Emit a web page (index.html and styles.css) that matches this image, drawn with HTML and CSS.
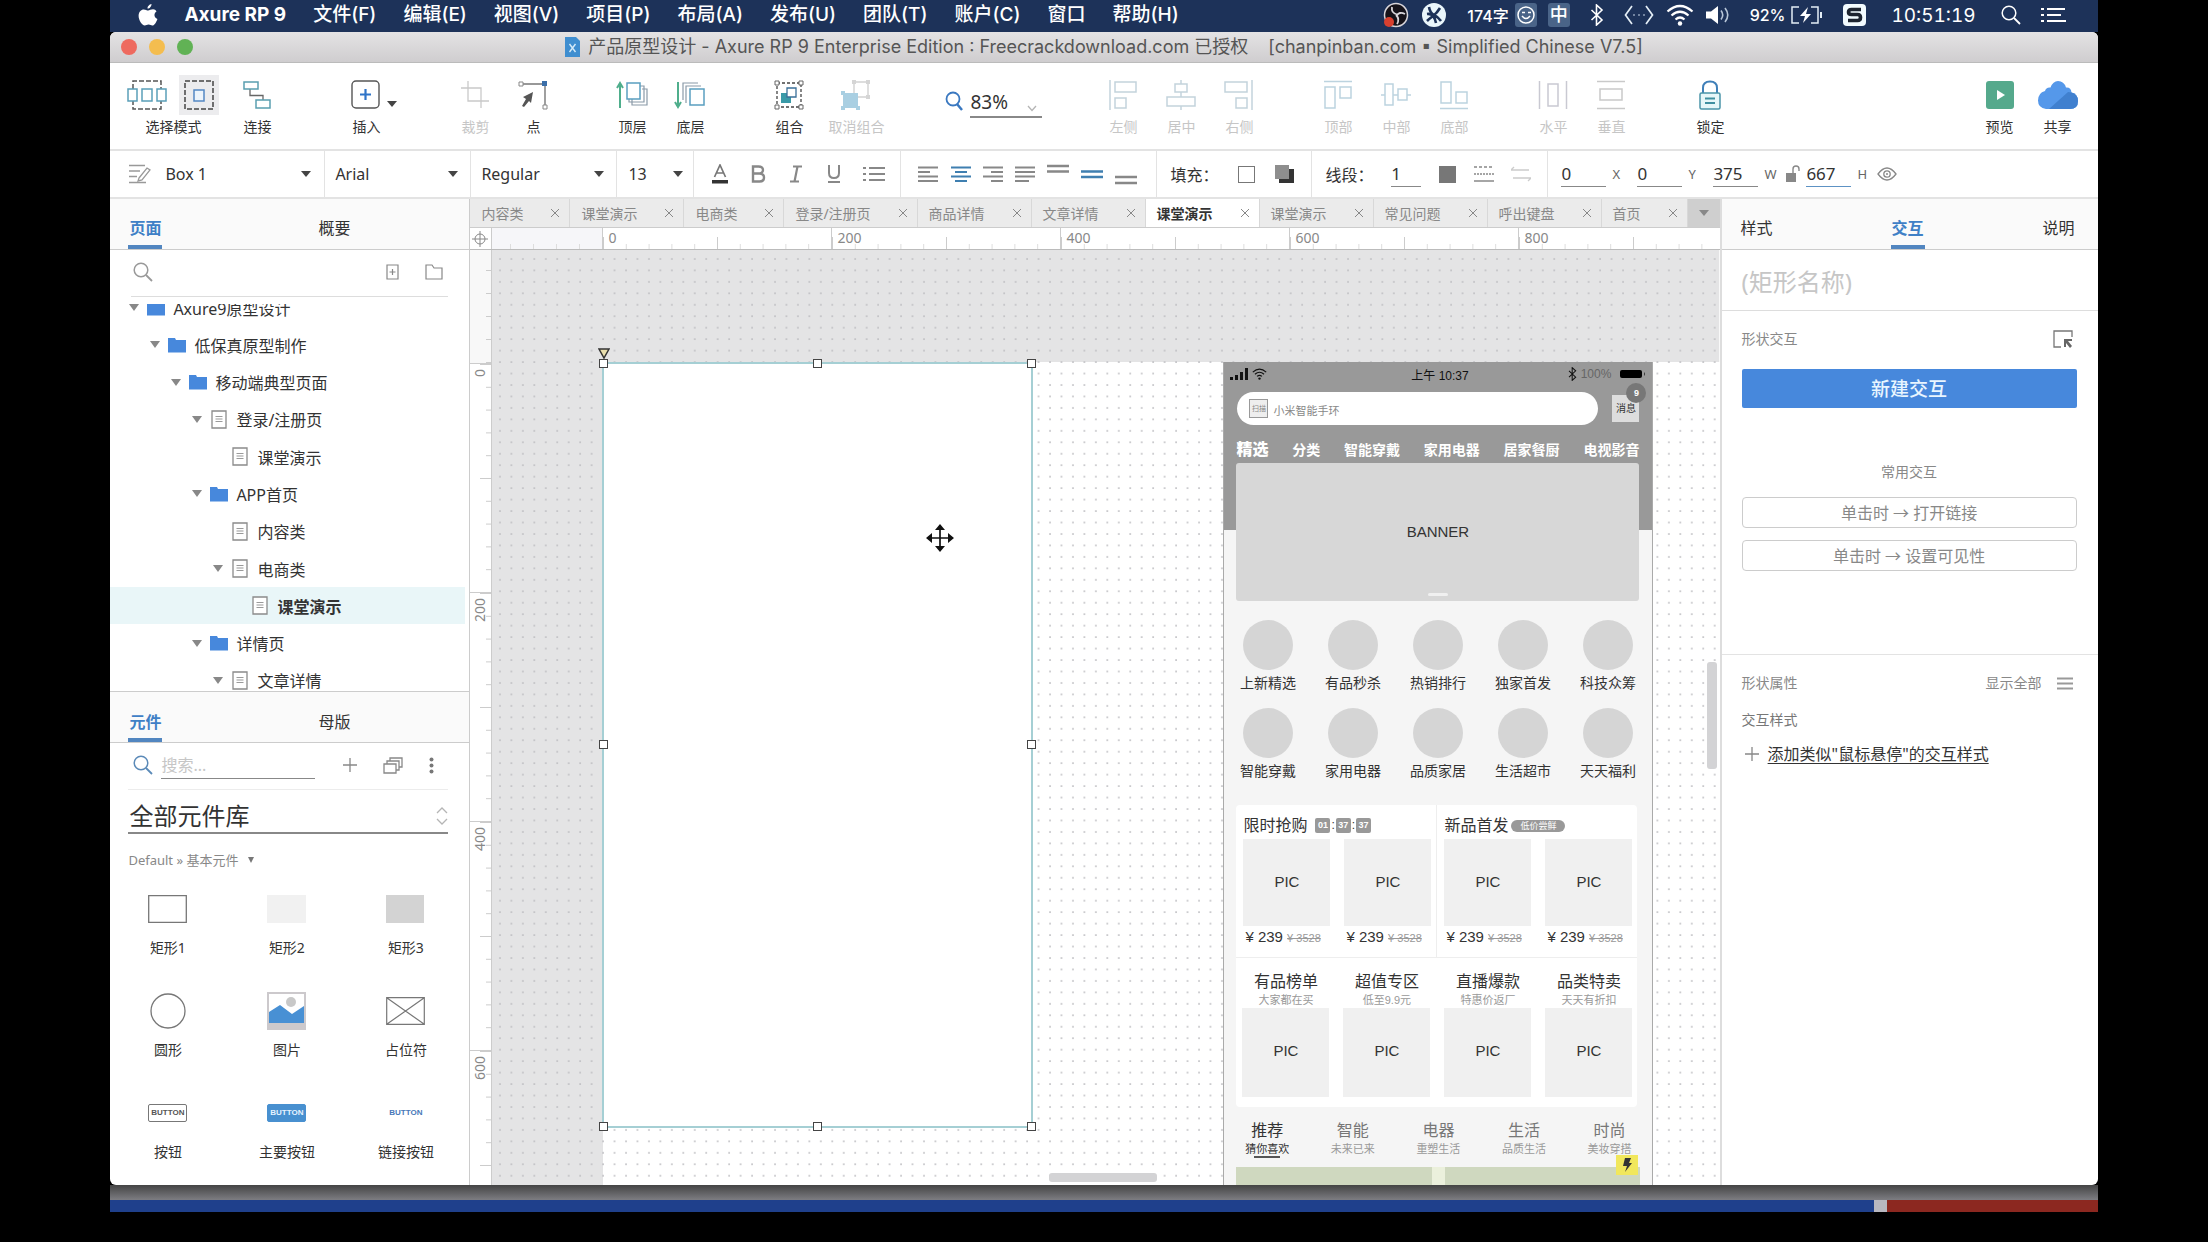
FILE: index.html
```html
<!DOCTYPE html>
<html lang="zh-CN">
<head>
    <meta charset="UTF-8">
    <meta name="viewport" content="width=device-width, initial-scale=1.0">
    <title>产品原型设计 - Axure RP 9</title>
    <link rel="stylesheet" href="styles.css">
</head>
<body>
    <svg width="0" height="0" class="sprite" aria-hidden="true">
        <symbol id="folder" viewBox="0 0 18 16"><path d="M0 1h7l1 2h10v12.500H0z" fill="#4788dc"/></symbol>
        <symbol id="page" viewBox="0 0 16 19"><path d="M1 1h14v17H1z" fill="#fff" stroke="#8b8b8b" stroke-width="1.300"/><path d="M4.500 6.500h7M4.500 9h7M4.500 11.500h7" stroke="#9a9a9a" stroke-width="1.200"/></symbol>
        <symbol id="search" viewBox="0 0 20 20"><circle cx="8" cy="8" r="6.800" fill="none" stroke="currentColor" stroke-width="1.500"/><path d="M13 13l6 6" stroke="currentColor" stroke-width="1.800"/></symbol>
        <symbol id="bt" viewBox="0 0 14 22"><path d="M1.500 6l10.500 10-5.500 5V1L12 6 1.500 16" fill="none" stroke="currentColor" stroke-width="1.600"/></symbol>
        <symbol id="wifi" viewBox="0 0 28 22"><g fill="none" stroke="currentColor" stroke-width="2.200"><path d="M1.500 7.500q12.500-11 25 0"/><path d="M5.500 11.500q8.500-7.500 17 0"/><path d="M9.500 15.500q4.500-4 9 0"/></g><circle cx="14" cy="19.500" r="2.200" fill="currentColor"/></symbol>
    </svg>

    <header class="menubar">
        <svg class="apple" width="20" height="22" viewBox="0 0 20 22"><path fill="#fff" d="M13.500 0c.2 2-1.700 4.700-4 4.600C9.300 2.600 11.400.3 13.500 0zM18.500 7.500c-3 2-2.600 6 .9 7.400-1 3-3 6.600-5 6.600-1.500 0-2-.9-3.800-.9s-2.400.9-3.800.9C3.900 21.500.6 16 .6 11.700c0-4 2.500-6.300 5.200-6.300 1.700 0 3 1.100 4.400 1.100 1.200 0 2.800-1.200 4.900-1.200 1.300 0 2.700.8 3.400 2.200z"/></svg>
        <nav class="menus">
            <button class="menu app">Axure RP 9</button>
            <button class="menu">文件(F)</button>
            <button class="menu">编辑(E)</button>
            <button class="menu">视图(V)</button>
            <button class="menu">项目(P)</button>
            <button class="menu">布局(A)</button>
            <button class="menu">发布(U)</button>
            <button class="menu">团队(T)</button>
            <button class="menu">账户(C)</button>
            <button class="menu">窗口</button>
            <button class="menu">帮助(H)</button>
        </nav>
        <div class="status">
            <div class="pair apps">
                <svg width="26" height="26" viewBox="0 0 26 26"><circle cx="13" cy="13" r="11.500" fill="#16131a" stroke="#d8d5da" stroke-width="1.500"/><path d="M9 5q-1 6 5 7.500M22 12q-6-3-8.500 2M14 22q3-5-1-9" fill="none" stroke="#d8d5da" stroke-width="1.800"/><circle cx="6" cy="20" r="5" fill="#d8402f"/></svg>
                <svg width="26" height="26" viewBox="0 0 26 26"><circle cx="13" cy="13" r="12" fill="#eaf6fb"/><path d="M8 5q1 6 5 8t7 6M19 6q-3 5-7 8t-6 5M6 12q7-1 9 9" stroke="#1c3158" stroke-width="2.600" fill="none"/></svg>
            </div>
            <div class="pair ime">
                <span>174字</span>
                <svg width="22" height="24" viewBox="0 0 22 24"><rect width="22" height="24" rx="3" fill="#4a6488"/><circle cx="11" cy="12" r="8" fill="none" stroke="#fff" stroke-width="1.500"/><path d="M7 9.500h3M13 9.500h3M7 13q4 5 8 0" fill="none" stroke="#fff" stroke-width="1.500"/></svg>
                <span class="zh">中</span>
            </div>
            <svg width="14" height="22"><use href="#bt"/></svg>
            <div class="pair">
                <svg width="30" height="20" viewBox="0 0 30 20"><path d="M8 1L1.500 10 8 19M22 1l6.500 9L22 19" fill="none" stroke="#e4eef6" stroke-width="1.700"/><path d="M9 10h2M14 10h2M19 10h2" stroke="#8fa0b8" stroke-width="1.500"/></svg>
                <svg width="28" height="22"><use href="#wifi"/></svg>
                <svg width="24" height="20" viewBox="0 0 24 20"><path d="M0 6.500h5L12 1v18l-7-5.500H0z" fill="#fff"/><path d="M15 5.500q3.500 4.500 0 9M19 3q5.500 7 0 14" fill="none" stroke="#b8c6d8" stroke-width="1.600"/></svg>
            </div>
            <div class="pair battery">
                <span>92%</span>
                <svg width="32" height="18" viewBox="0 0 32 18"><path d="M8 1H1v16h7M20 1h7v16h-7" fill="none" stroke="#e4eef6" stroke-width="1.500"/><path d="M17 1l-8 9h5l-2 7 8-9h-5z" fill="#fff"/><path d="M29 6v6h2V6z" fill="#e4eef6"/></svg>
            </div>
            <svg width="23" height="22" viewBox="0 0 23 22"><rect width="23" height="22" rx="4" fill="#f2fbff"/><path d="M18 5.500H8.500q-3 0-3 2.500t3 2.500h6q3 0 3 3t-3 3H5" fill="none" stroke="#1d2430" stroke-width="3.600"/></svg>
            <span class="clock">10:51:19</span>
            <svg width="20" height="20"><use href="#search"/></svg>
            <svg width="26" height="16" viewBox="0 0 26 16"><path d="M0 2h3M0 8h3M0 14h3M6 2h18M6 8h14M6 14h19" stroke="#fff" stroke-width="2.200"/></svg>
        </div>
    </header>

    <main class="window">
        <div class="titlebar">
            <div class="lights"><i class="red"></i><i class="yellow"></i><i class="green"></i></div>
            <h1 class="title">
                <svg width="15" height="20" viewBox="0 0 15 20"><path d="M0 0h11l4 4v16H0z" fill="#3f8ed0"/><path d="M4.500 7l6 8M10.500 7l-6 8" stroke="#d6ebf8" stroke-width="1.400"/></svg>
                <span>产品原型设计 - Axure RP 9 Enterprise Edition : Freecrackdownload.com 已授权</span>
                <span class="license">[chanpinban.com ▪ Simplified Chinese V7.5]</span>
            </h1>
        </div>

        <div class="toolbar">
            <div class="group">
                <button class="tool select-mode">
                    <span class="modes">
                        <svg width="40" height="30" viewBox="0 0 40 30"><path d="M6 9V1h28v8M6 20v9h28v-9" fill="none" stroke="#555" stroke-width="1.500" stroke-dasharray="5 2"/><g fill="#fff" stroke="#5a9fb8" stroke-width="1.500"><path d="M1 9h9v12H1zM15 9h10v12H15zM30 9h9v12h-9z"/></g></svg>
                        <span class="mode-on"><svg width="30" height="30" viewBox="0 0 30 30"><path d="M1 1h28v28H1z" fill="none" stroke="#444" stroke-width="1.500" stroke-dasharray="5 2"/><path d="M10 10h10v11H10z" fill="#edf4fb" stroke="#5488c4" stroke-width="1.500"/></svg></span>
                    </span>
                    选择模式
                </button>
                <button class="tool"><svg width="30" height="30" viewBox="0 0 30 30"><path d="M8 9v6.500h13V20" fill="none" stroke="#666" stroke-width="1.300"/><g fill="#fff" stroke="#5a9fb0" stroke-width="1.500"><path d="M2 2h14v7H2zM14 20h14v8H14z"/></g></svg>连接</button>
            </div>
            <div class="group insert">
                <button class="tool"><svg width="30" height="30" viewBox="0 0 30 30"><rect x="1" y="1" width="27" height="27" rx="4" fill="#fff" stroke="#555" stroke-width="1.400"/><path d="M9 14.500h11M14.500 9v11" stroke="#2f74c8" stroke-width="2.200"/></svg>插入</button>
                <i class="caret"></i>
            </div>
            <div class="group">
                <button class="tool off"><svg width="30" height="30" viewBox="0 0 30 30"><path d="M1 8h20v20M8 1v20h21" fill="none" stroke="#c9c9c9" stroke-width="1.300"/></svg>裁剪</button>
                <button class="tool"><svg width="30" height="30" viewBox="0 0 30 30"><path d="M3 4h24v23" fill="none" stroke="#777" stroke-width="1.400"/><path d="M1 2h4v4H1zM25 25h4v4h-4z" fill="#fff" stroke="#888"/><path d="M24 1h5v5h-5z" fill="#3b6ea8"/><path d="M15 12l-2 11-2-2-5 6-2-1 4-7-3-2z" fill="#555"/></svg>点</button>
            </div>
            <div class="group">
                <button class="tool"><svg width="32" height="30" viewBox="0 0 32 30"><path d="M4 28V4M1 8l3-5 3 5" fill="none" stroke="#4fae8c" stroke-width="2"/><path d="M16 18v7h15V9h-5M13 18v4h15V6h-5" fill="none" stroke="#8a9aa8" stroke-width="1.200"/><path d="M11 3h13v16H11z" fill="#fff" stroke="#5a9fc0" stroke-width="1.500"/></svg>顶层</button>
                <button class="tool"><svg width="32" height="30" viewBox="0 0 32 30"><path d="M4 2v24M1 22l3 5 3-5" fill="none" stroke="#4fae8c" stroke-width="2"/><path d="M9 20V3h15M12 23V6h15" fill="none" stroke="#8a9aa8" stroke-width="1.200"/><path d="M16 9h14v16H16z" fill="#fff" stroke="#5a9fc0" stroke-width="1.500"/></svg>底层</button>
            </div>
            <div class="group">
                <button class="tool"><svg width="30" height="30" viewBox="0 0 30 30"><path d="M3 3h24v24H3z" fill="none" stroke="#444" stroke-width="1.300" stroke-dasharray="3 2"/><path d="M1 1h4v4H1zM25 1h4v4h-4zM1 25h4v4H1zM25 25h4v4h-4z" fill="#fff" stroke="#666"/><path d="M7 13h10v10H7z" fill="#3a9aa8"/><path d="M13 8h9v9h-9z" fill="#fff" stroke="#3a6f98" stroke-width="1.300"/></svg>组合</button>
                <button class="tool wide off"><svg width="30" height="30" viewBox="0 0 30 30"><path d="M13 2h14v15H13z" fill="#fff" stroke="#d2d2d2" stroke-width="1.400"/><path d="M2 13h15v15H2z" fill="#a9cfe2"/><path d="M11 0h4v4h-4zM25 0h4v4h-4zM25 15h4v4h-4z" fill="#d5d5d5"/><path d="M0 11h4v4H0zM15 26h4v4h-4zM0 26h4v4H0z" fill="#a9cfe2"/></svg>取消组合</button>
            </div>
            <div class="zoom">
                <label for="zoom"><svg width="18" height="20" viewBox="0 0 18 20"><circle cx="8" cy="8" r="6.500" fill="none" stroke="#3a78c0" stroke-width="1.800"/><path d="M12 13l5 6" stroke="#3a78c0" stroke-width="2.500"/></svg></label>
                <select id="zoom"><option>83%</option></select>
                <svg class="chev" width="10" height="7" viewBox="0 0 10 7"><path d="M1 1l4 4.500L9 1" fill="none" stroke="#b5b5b5" stroke-width="1.300"/></svg>
            </div>
            <div class="group">
                <button class="tool off"><svg width="30" height="30" viewBox="0 0 30 30"><g fill="none" stroke="#c3d3dc" stroke-width="1.500"><path d="M2 0v30M7 2h21v10H7zM7 18h11v10H7z"/></g></svg>左侧</button>
                <button class="tool off"><svg width="30" height="30" viewBox="0 0 30 30"><g fill="#fff" stroke="#c3d3dc" stroke-width="1.500"><path d="M15 0v30"/><path d="M9 4h12v8H9zM1 17h28v9H1z"/></g></svg>居中</button>
                <button class="tool off"><svg width="30" height="30" viewBox="0 0 30 30"><g fill="none" stroke="#c3d3dc" stroke-width="1.500"><path d="M28 0v30M1 2h22v10H1zM12 18h11v10H12z"/></g></svg>右侧</button>
            </div>
            <div class="group">
                <button class="tool off"><svg width="30" height="30" viewBox="0 0 30 30"><g fill="none" stroke="#bcd3df" stroke-width="1.500"><path d="M1 1.500h28M2 7h10v21H2zM17 7h11v11H17z"/></g></svg>顶部</button>
                <button class="tool off"><svg width="30" height="30" viewBox="0 0 30 30"><g fill="#fff" stroke="#bcd3df" stroke-width="1.500"><path d="M0 15h30"/><path d="M4 4h8v21H4zM17 9h9v11h-9z"/></g></svg>中部</button>
                <button class="tool off"><svg width="30" height="30" viewBox="0 0 30 30"><g fill="none" stroke="#bcd3df" stroke-width="1.500"><path d="M1 28.500h28M2 2h10v21H2zM17 12h11v11H17z"/></g></svg>底部</button>
            </div>
            <div class="group">
                <button class="tool off"><svg width="30" height="30" viewBox="0 0 30 30"><g fill="none" stroke="#c9c9d2" stroke-width="1.500"><path d="M1.500 1v28M28.500 1v28M10 4h10v22H10z"/></g></svg>水平</button>
                <button class="tool off"><svg width="30" height="30" viewBox="0 0 30 30"><g fill="none" stroke="#c9c9c9" stroke-width="1.500"><path d="M1 1.500h28M1 28.500h28M4 9h22v11H4z"/></g></svg>垂直</button>
            </div>
            <div class="group">
                <button class="tool"><svg width="24" height="30" viewBox="0 0 24 30"><path d="M5 13V8q0-6.500 7-6.500T19 8v5" fill="none" stroke="#3f7fb8" stroke-width="2"/><rect x="2" y="13" width="20" height="16" rx="1.500" fill="#e6f6f8" stroke="#4a94a8" stroke-width="1.500"/><path d="M7 18.500h10M7 23h10" stroke="#3f8fa0" stroke-width="2"/></svg>锁定</button>
            </div>
            <div class="group share">
                <button class="tool"><svg width="28" height="30" viewBox="0 0 28 30"><rect y="1" width="28" height="28" rx="3" fill="#55a98c"/><path d="M11 10l8 5-8 5z" fill="#fff"/></svg>预览</button>
                <button class="tool"><svg width="42" height="30" viewBox="0 0 42 30"><path d="M9 29q-8-1-8-8.500Q1 13 8 11q1-4 5.500-3.500Q16 1 21 1q6 0 8 6.500 5-.5 5.500 5Q41 14 41 21q0 8-8 8z" fill="#5598ea"/><path d="M12 29L31 12l3.500.5Q41 14 41 21q0 8-8 8z" fill="#4080cf"/></svg>共享</button>
            </div>
        </div>

        <div class="formatbar">
            <div class="cell style-cell">
                <svg width="22" height="20" viewBox="0 0 22 20"><path d="M0 1.500h16M0 7h11M0 12.500h8M0 18.500h17" stroke="#999" stroke-width="1.500"/><path d="M10 14l8-10 3 2-8 10-4 1z" fill="#fff" stroke="#999" stroke-width="1.300"/></svg>
                <select aria-label="样式"><option>Box 1</option></select><i class="caret"></i>
            </div>
            <div class="cell font-cell"><select aria-label="字体"><option>Arial</option></select><i class="caret"></i></div>
            <div class="cell font-cell"><select aria-label="字重"><option>Regular</option></select><i class="caret"></i></div>
            <div class="cell size-cell"><select aria-label="字号"><option>13</option></select><i class="caret"></i></div>
            <div class="cell text-cell">
                <button class="ico" aria-label="颜色"><svg width="18" height="20" viewBox="0 0 18 20"><path d="M3.500 13L9 1l5.500 12M5.500 9h7" fill="none" stroke="#777" stroke-width="1.700"/><path d="M1 16h16v3.500H1z" fill="#333"/></svg></button>
                <button class="ico" aria-label="粗体"><svg width="18" height="20" viewBox="0 0 18 20"><path d="M4 2.500h5.500q4.500 0 4.500 3.500t-4.500 3.500H4zM4 9.500h6.500q4.500 0 4.500 4t-4.500 4H4z" fill="none" stroke="#888" stroke-width="2.400"/></svg></button>
                <button class="ico" aria-label="斜体"><svg width="18" height="20" viewBox="0 0 18 20"><path d="M6 2.500h9M3 17.500h9M10.500 2.500l-3 15" fill="none" stroke="#888" stroke-width="2.200"/></svg></button>
                <button class="ico" aria-label="下划线"><svg width="18" height="20" viewBox="0 0 18 20"><path d="M4 1v8q0 5 5 5t5-5V1M3 18h12" fill="none" stroke="#888" stroke-width="2"/></svg></button>
                <button class="ico" aria-label="列表"><svg width="22" height="18" viewBox="0 0 22 18"><path d="M0 3h3M0 9h3M0 15h3M6 3h16M6 9h16M6 15h16" stroke="#888" stroke-width="2.200"/></svg></button>
            </div>
            <div class="cell align-cell">
                <button class="ico" aria-label="左对齐"><svg width="20" height="18" viewBox="0 0 20 18"><path d="M0 2.500h20M0 7h12M0 11.500h20M0 16h20" stroke="#888" stroke-width="2"/></svg></button>
                <button class="ico" aria-label="居中对齐"><svg width="20" height="18" viewBox="0 0 20 18"><path d="M0 2.500h20M4 7h12M0 11.500h20M4 16h12" stroke="#3f7fb0" stroke-width="2"/></svg></button>
                <button class="ico" aria-label="右对齐"><svg width="20" height="18" viewBox="0 0 20 18"><path d="M0 2.500h20M8 7h12M0 11.500h20M8 16h12" stroke="#888" stroke-width="2"/></svg></button>
                <button class="ico" aria-label="两端对齐"><svg width="20" height="18" viewBox="0 0 20 18"><path d="M0 2.500h20M0 7h20M0 11.500h20M0 16h14" stroke="#888" stroke-width="2"/></svg></button>
                <button class="ico" aria-label="顶端"><svg width="22" height="22" viewBox="0 0 22 22"><path d="M0 3h22M0 8.500h22" stroke="#888" stroke-width="2.300"/></svg></button>
                <button class="ico" aria-label="垂直居中"><svg width="22" height="22" viewBox="0 0 22 22"><path d="M0 8.500h22M0 14h22" stroke="#3f7fb0" stroke-width="2.300"/></svg></button>
                <button class="ico" aria-label="底端"><svg width="22" height="22" viewBox="0 0 22 22"><path d="M0 14h22M0 20h22" stroke="#888" stroke-width="2.300"/></svg></button>
            </div>
            <div class="cell fill-cell">
                <span>填充：</span>
                <button class="ico swatch" aria-label="填充颜色"></button>
                <button class="ico" aria-label="阴影"><svg width="19" height="18" viewBox="0 0 19 18"><path d="M4 4h15v14H4z" fill="#333"/><path d="M0 0h14v14H0z" fill="#8e8e8e"/></svg></button>
            </div>
            <div class="cell line-cell">
                <label for="line">线段：</label>
                <input id="line" class="num tiny" value="1">
                <button class="ico swatch dark" aria-label="线段颜色"></button>
                <button class="ico" aria-label="线型"><svg width="20" height="18" viewBox="0 0 20 18"><path d="M0 2h20" stroke="#888" stroke-width="1.300" stroke-dasharray="3 2"/><path d="M0 9h20" stroke="#888" stroke-width="1.500" stroke-dasharray="2 1"/><path d="M0 16h20" stroke="#888" stroke-width="1.500"/></svg></button>
                <button class="ico" aria-label="箭头"><svg width="20" height="16" viewBox="0 0 20 16"><path d="M3 1L0 4h18M17 15l3-3H2" fill="none" stroke="#ccc" stroke-width="1.300"/></svg></button>
            </div>
            <div class="cell pos-cell">
                <input id="px" class="num" value="0"><label for="px">X</label>
                <input id="py" class="num" value="0"><label for="py">Y</label>
                <input id="pw" class="num" value="375"><label for="pw">W</label>
                <svg class="unlock" width="14" height="18" viewBox="0 0 14 18"><path d="M0 8h10v9H0z" fill="#888"/><path d="M7 8V4q0-3 3-3t3 3v2" fill="none" stroke="#888" stroke-width="1.400"/></svg>
                <input id="ph" class="num on" value="667"><label for="ph">H</label>
                <svg class="eye" width="20" height="14" viewBox="0 0 20 14"><path d="M1 7q9-12 18 0-9 12-18 0z" fill="none" stroke="#888" stroke-width="1.300"/><circle cx="10" cy="7" r="3.200" fill="none" stroke="#888" stroke-width="1.300"/><circle cx="10" cy="7" r="1" fill="#888"/></svg>
            </div>
        </div>

        <div class="workspace">
            <aside class="left">
                <div class="panel-tabs">
                    <button class="ptab on">页面</button>
                    <button class="ptab">概要</button>
                </div>
                <div class="page-search">
                    <svg width="20" height="20"><use href="#search"/></svg>
                    <button class="ico push" aria-label="添加页面"><svg width="13" height="16" viewBox="0 0 13 16"><path d="M1 1h11v14H1zM3.500 8h6M6.500 5v6" fill="none" stroke="#888" stroke-width="1.200"/></svg></button>
                    <button class="ico" aria-label="添加文件夹"><svg width="18" height="16" viewBox="0 0 18 16"><path d="M1 1h6l2 3h8v11H1z" fill="none" stroke="#888" stroke-width="1.200"/></svg></button>
                </div>
                <div class="tree-box">
                    <ul class="tree">
                        <li class="l0"><i class="caret"></i><svg width="18" height="16"><use href="#folder"/></svg>Axure9原型设计</li>
                        <li class="l1"><i class="caret"></i><svg width="18" height="16"><use href="#folder"/></svg>低保真原型制作</li>
                        <li class="l2"><i class="caret"></i><svg width="18" height="16"><use href="#folder"/></svg>移动端典型页面</li>
                        <li class="l3"><i class="caret"></i><svg width="18" height="19"><use href="#page"/></svg>登录/注册页</li>
                        <li class="l4 leaf"><i class="caret"></i><svg width="18" height="19"><use href="#page"/></svg>课堂演示</li>
                        <li class="l3"><i class="caret"></i><svg width="18" height="16"><use href="#folder"/></svg>APP首页</li>
                        <li class="l4 leaf"><i class="caret"></i><svg width="18" height="19"><use href="#page"/></svg>内容类</li>
                        <li class="l4"><i class="caret"></i><svg width="18" height="19"><use href="#page"/></svg>电商类</li>
                        <li class="l5 leaf current"><i class="caret"></i><svg width="18" height="19"><use href="#page"/></svg>课堂演示</li>
                        <li class="l3"><i class="caret"></i><svg width="18" height="16"><use href="#folder"/></svg>详情页</li>
                        <li class="l4"><i class="caret"></i><svg width="18" height="19"><use href="#page"/></svg>文章详情</li>
                    </ul>
                </div>
                <div class="panel-tabs second">
                    <button class="ptab on">元件</button>
                    <button class="ptab">母版</button>
                </div>
                <div class="lib-search">
                    <label for="lib-q"><svg width="20" height="20"><use href="#search"/></svg></label>
                    <input id="lib-q" type="text" placeholder="搜索...">
                    <button class="ico" aria-label="添加"><svg width="14" height="14" viewBox="0 0 14 14"><path d="M0 7h14M7 0v14" stroke="#888" stroke-width="1.300"/></svg></button>
                    <button class="ico" aria-label="元件库"><svg width="20" height="17" viewBox="0 0 20 17"><path d="M1 7h12v9H1zM4 7V4h12v9h-3M7 4V1h12v9h-3" fill="none" stroke="#888" stroke-width="1.300"/></svg></button>
                    <button class="ico" aria-label="更多"><svg width="5" height="17" viewBox="0 0 5 17"><g fill="#777"><circle cx="2.500" cy="2.500" r="2"/><circle cx="2.500" cy="8.500" r="2"/><circle cx="2.500" cy="14.500" r="2"/></g></svg></button>
                </div>
                <div class="lib-pick">
                    <select aria-label="元件库"><option>全部元件库</option></select>
                    <svg width="12" height="18" viewBox="0 0 12 18"><path d="M1 6l5-5 5 5M1 12l5 5 5-5" fill="none" stroke="#b5b5b5" stroke-width="1.300"/></svg>
                </div>
                <div class="crumb">Default » 基本元件 <i class="caret"></i></div>
                <div class="widgets">
                    <div class="widget"><span class="shape"><svg width="39" height="28" viewBox="0 0 39 28"><path d="M.7.7h37.600v26.600H.7z" fill="#fff" stroke="#777" stroke-width="1.300"/></svg></span>矩形1</div>
                    <div class="widget"><span class="shape"><svg width="39" height="28" viewBox="0 0 39 28"><path d="M0 0h39v28H0z" fill="#f1f1f1"/></svg></span>矩形2</div>
                    <div class="widget"><span class="shape"><svg width="39" height="28" viewBox="0 0 39 28"><path d="M0 0h38v28H0z" fill="#d3d3d3"/></svg></span>矩形3</div>
                    <div class="widget"><span class="shape"><svg width="36" height="36" viewBox="0 0 36 36"><circle cx="18" cy="18" r="17" fill="#fff" stroke="#777" stroke-width="1.300"/></svg></span>圆形</div>
                    <div class="widget"><span class="shape"><svg width="39" height="38" viewBox="0 0 39 38"><path d="M0 0h39v38H0z" fill="#ccc9cc"/><path d="M2 2h35v29H2z" fill="#fff"/><circle cx="24" cy="10" r="5" fill="#c8c8c8"/><path d="M2 20l11-7 12 9 12-8v17H2z" fill="#4890d4"/></svg></span>图片</div>
                    <div class="widget"><span class="shape"><svg width="39" height="28" viewBox="0 0 39 28"><path d="M.7.7h37.600v26.600H.7zL38.300 27.300M38.300.7L.7 27.300" fill="none" stroke="#777" stroke-width="1.200"/></svg></span>占位符</div>
                    <div class="widget"><span class="shape"><b class="mini">BUTTON</b></span>按钮</div>
                    <div class="widget"><span class="shape"><b class="mini primary">BUTTON</b></span>主要按钮</div>
                    <div class="widget"><span class="shape"><b class="mini link">BUTTON</b></span>链接按钮</div>
                </div>
            </aside>

            <section class="center">
                <div class="tabs">
                    <button class="tab">内容类<i class="x"></i></button>
                    <button class="tab">课堂演示<i class="x"></i></button>
                    <button class="tab">电商类<i class="x"></i></button>
                    <button class="tab">登录/注册页<i class="x"></i></button>
                    <button class="tab">商品详情<i class="x"></i></button>
                    <button class="tab">文章详情<i class="x"></i></button>
                    <button class="tab on">课堂演示<i class="x"></i></button>
                    <button class="tab">课堂演示<i class="x"></i></button>
                    <button class="tab">常见问题<i class="x"></i></button>
                    <button class="tab">呼出键盘<i class="x"></i></button>
                    <button class="tab">首页<i class="x"></i></button>
                    <button class="tab more" aria-label="更多页面"><i class="caret"></i></button>
                </div>
                <div class="hrow">
                    <svg class="origin" width="16" height="16" viewBox="0 0 16 16"><circle cx="8" cy="8" r="5" fill="none" stroke="#888"/><path d="M0 8h16M8 0v16" stroke="#888"/></svg>
                    <div class="hruler">
                        <span class="lead"></span><span>0</span><span>200</span><span>400</span><span>600</span><span>800</span>
                    </div>
                </div>
                <div class="stage">
                    <div class="vruler">
                        <span class="lead"></span><span><b>0</b></span><span><b>200</b></span><span><b>400</b></span><span><b>600</b></span>
                    </div>
                    <div class="canvas">
                        <svg class="dots" width="100%" height="100%">
                            <defs><pattern id="grid" x="105.300" y="106.300" width="11.460" height="11.460" patternUnits="userSpaceOnUse"><rect x="5" y="5" width="1.600" height="1.600" fill="#bcbcc0"/></pattern></defs>
                            <rect width="100%" height="100%" fill="#e4e4e5"/>
                            <rect x="111" y="112" width="100%" height="100%" fill="#fff"/>
                            <rect width="100%" height="100%" fill="url(#grid)"/>
                        </svg>

                        <div class="selection">
                            <i class="h nw"></i><i class="h n"></i><i class="h ne"></i>
                            <i class="h w"></i><i class="h e"></i>
                            <i class="h sw"></i><i class="h s"></i><i class="h se"></i>
                            <svg class="corner" width="12" height="11" viewBox="0 0 12 11"><path d="M1 1h10L6 10z" fill="#e9dfae" stroke="#333" stroke-width="1.500"/></svg>
                        </div>

                        <div class="phone">
                            <div class="phone-status">
                                <svg width="18" height="12" viewBox="0 0 18 12"><path d="M0 9h3v3H0zM5 7h3v5H5zM10 4h3v8h-3zM15 0h3v12h-3z" fill="#111"/></svg>
                                <svg width="15" height="12"><use href="#wifi"/></svg>
                                <span class="time">上午 10:37</span>
                                <svg width="9" height="14"><use href="#bt"/></svg>
                                <span class="pct">100%</span>
                                <svg width="26" height="10" viewBox="0 0 26 10"><rect y="1" width="22" height="8" rx="2" fill="#000"/><path d="M24 3q2 2 0 4z" fill="#333"/></svg>
                            </div>
                            <div class="phone-search">
                                <div class="pill"><span class="scan">扫描</span>小米智能手环</div>
                                <div class="msg">消息<i>9</i></div>
                            </div>
                            <div class="cats"><b>精选</b><span>分类</span><span>智能穿戴</span><span>家用电器</span><span>居家餐厨</span><span>电视影音</span></div>
                            <div class="banner">BANNER<i></i></div>
                            <div class="circles">
                                <div><i></i>上新精选</div><div><i></i>有品秒杀</div><div><i></i>热销排行</div><div><i></i>独家首发</div><div><i></i>科技众筹</div>
                                <div><i></i>智能穿戴</div><div><i></i>家用电器</div><div><i></i>品质家居</div><div><i></i>生活超市</div><div><i></i>天天福利</div>
                            </div>
                            <div class="card">
                                <div class="deals">
                                    <div class="deal">
                                        <h2>限时抢购 <span class="count"><i>01</i>:<i>37</i>:<i>37</i></span></h2>
                                        <div class="pics">
                                            <div><div class="pic">PIC</div><p>¥ 239 <s>¥ 3528</s></p></div>
                                            <div><div class="pic">PIC</div><p>¥ 239 <s>¥ 3528</s></p></div>
                                        </div>
                                    </div>
                                    <div class="deal">
                                        <h2>新品首发<span class="tag">低价尝鲜</span></h2>
                                        <div class="pics">
                                            <div><div class="pic">PIC</div><p>¥ 239 <s>¥ 3528</s></p></div>
                                            <div><div class="pic">PIC</div><p>¥ 239 <s>¥ 3528</s></p></div>
                                        </div>
                                    </div>
                                </div>
                                <div class="zones">
                                    <div><h3>有品榜单</h3><small>大家都在买</small><div class="pic">PIC</div></div>
                                    <div><h3>超值专区</h3><small>低至9.9元</small><div class="pic">PIC</div></div>
                                    <div><h3>直播爆款</h3><small>特惠价返厂</small><div class="pic">PIC</div></div>
                                    <div><h3>品类特卖</h3><small>天天有折扣</small><div class="pic">PIC</div></div>
                                </div>
                            </div>
                            <div class="feeds">
                                <div class="on"><h3>推荐</h3><small>猜你喜欢</small></div>
                                <div><h3>智能</h3><small>未来已来</small></div>
                                <div><h3>电器</h3><small>重塑生活</small></div>
                                <div><h3>生活</h3><small>品质生活</small></div>
                                <div><h3>时尚</h3><small>美妆穿搭</small></div>
                            </div>
                            <div class="goods"><i></i><i></i>
                                <svg class="bolt" width="22" height="20" viewBox="0 0 22 20"><path d="M0 0h22v20H0z" fill="#f1e75c"/><path d="M9 3h6l-2 5h3l-7 9 2-6H7z" fill="#333"/></svg>
                            </div>
                        </div>

                        <svg class="cursor" width="28" height="28" viewBox="0 0 28 28"><path d="M14 3v22M3 14h22" stroke="#111" stroke-width="1.700"/><path d="M14 0l5 6H9zM14 28l5-6H9zM0 14l6-5v10zM28 14l-6-5v10z" fill="#111"/></svg>
                        <i class="vbar"></i>
                        <i class="hbar"></i>
                    </div>
                </div>
            </section>

            <aside class="right">
                <div class="panel-tabs spread">
                    <button class="ptab">样式</button>
                    <button class="ptab on">交互</button>
                    <button class="ptab">说明</button>
                </div>
                <div class="name-row"><input type="text" aria-label="矩形名称" placeholder="(矩形名称)"></div>
                <div class="interactions">
                    <div class="row">形状交互
                        <svg width="20" height="18" viewBox="0 0 20 18"><path d="M8 17H1V1h18v6" fill="none" stroke="#777" stroke-width="1.300"/><path d="M11 9h8v2h-4l4 5-2 2-4-5v4h-2z" fill="#666"/></svg>
                    </div>
                    <button class="new-btn">新建交互</button>
                    <p class="common">常用交互</p>
                    <button class="quick">单击时 → 打开链接</button>
                    <button class="quick">单击时 → 设置可见性</button>
                </div>
                <div class="props">
                    <div class="row">形状属性
                        <span class="all">显示全部 <svg width="16" height="13" viewBox="0 0 16 13"><path d="M0 1.500h16M0 6.500h16M0 11.500h16" stroke="#999" stroke-width="2.200"/></svg></span>
                    </div>
                    <p class="sub">交互样式</p>
                    <div class="add">
                        <svg width="14" height="14" viewBox="0 0 14 14"><path d="M0 7h14M7 0v14" stroke="#888" stroke-width="1.300"/></svg>
                        <a href="#">添加类似"鼠标悬停"的交互样式</a>
                    </div>
                </div>
            </aside>
        </div>
    </main>
    <div class="under"></div>
    <div class="strip"><i class="blue"></i><i class="maroon"></i></div>
</body>
</html>
```
FILE: styles.css
```css
* {
    box-sizing: border-box;
}
body {
    margin: 0;
    padding: 0 5% 30px;
    height: 100vh;
    display: flex;
    flex-direction: column;
    background: #000;
    overflow: hidden;
    color: #333;
    font-family: "Noto Sans", "Noto Sans CJK SC", sans-serif;
    font-size: 16px;
}
button, input, select {
    font: inherit;
    color: inherit;
    background: none;
    border: none;
    padding: 0;
    margin: 0;
    appearance: none;
    outline: none;
}
svg {
    flex: none;
    display: block;
}
h1, h2, h3, p, ul {
    margin: 0;
    padding: 0;
    font-weight: normal;
    list-style: none;
}
.sprite {
    position: absolute;
}
.caret {
    flex: none;
    border: 5px solid transparent;
    border-top: 6px solid #444;
    border-bottom: 0;
}
.ico {
    display: flex;
    align-items: center;
}

/* mac menu bar */
.menubar {
    flex: none;
    height: 32px;
    padding: 0 31px 2px 28px;
    display: flex;
    align-items: center;
    background: #1d3259;
    color: #fff;
    font-family: Inter, "Noto Sans CJK SC", sans-serif;
    font-size: 19px;
}
.menus {
    display: flex;
    gap: 27px;
    margin-left: 26px;
}
.menu {
    font-weight: 500;
    line-height: 24px;
    white-space: nowrap;
}
.app {
    font-weight: 700;
}
.status {
    display: flex;
    align-items: center;
    gap: 20px;
    margin-left: auto;
    color: #fff;
}
.pair {
    display: flex;
    align-items: center;
    gap: 12px;
}
.ime, .battery {
    gap: 6px;
    font-size: 16px;
    font-weight: 500;
}
.zh {
    margin-left: 5px;
    padding: 0 2px;
    line-height: 24px;
    font-size: 18px;
    background: #4a6488;
    border-radius: 3px;
}
.clock {
    padding: 0 5px;
    font-variant-numeric: tabular-nums;
}

/* window */
.window {
    flex: 1;
    min-height: 0;
    display: flex;
    flex-direction: column;
    background: #fff;
    border-radius: 6px;
    overflow: hidden;
}
.titlebar {
    flex: none;
    height: 31px;
    display: flex;
    align-items: center;
    background: linear-gradient(#e4e3e4, #cfcdcf);
    border-bottom: 1px solid #bbb;
}
.lights {
    display: flex;
    gap: 12px;
    width: 75px;
    margin-left: 11px;
}
.lights i {
    width: 16px;
    height: 16px;
    border-radius: 50%;
}
.red { background: #ee6a5f; }
.yellow { background: #f4bd4f; }
.green { background: #61b255; }
.title {
    flex: 1;
    display: flex;
    justify-content: center;
    align-items: center;
    gap: 8px;
    padding-right: 86px;
    font-family: Inter, "Noto Sans CJK SC", sans-serif;
    font-size: 18px;
    line-height: 24px;
    color: #555;
    white-space: nowrap;
}
.license {
    margin-left: 12px;
}
.toolbar {
    flex: none;
    height: 88px;
    padding: 11px 11px 0 8px;
    display: flex;
    gap: 41px;
    border-bottom: 2px solid #e3e3e3;
}
.group {
    display: flex;
}
.tool {
    width: 58px;
    height: 63px;
    display: flex;
    flex-direction: column;
    align-items: center;
    justify-content: space-between;
    padding-top: 6px;
    font-size: 14px;
    line-height: 20px;
    color: #333;
    white-space: nowrap;
}
.tool.wide {
    width: 76px;
}
.tool.select-mode {
    width: 110px;
    padding-top: 1px;
}
.tool.off {
    color: #c6c6c6;
}
.modes {
    display: flex;
    align-items: center;
    gap: 12px;
}
.mode-on {
    padding: 5px;
    background: #ececee;
}
.insert {
    width: 78px;
    padding-left: 10px;
}
.insert .caret {
    margin: 27px 0 0 -8px;
}
.share {
    margin-left: auto;
}
.zoom {
    width: 118px;
    padding-left: 10px;
    height: 44px;
    display: flex;
    align-items: flex-end;
    gap: 7px;
}
.zoom label {
    padding-bottom: 7px;
}
.zoom select {
    width: 72px;
    height: 30px;
    font-size: 19px;
    line-height: 24px;
    border-bottom: 2px solid #888;
}
.chev {
    margin: 0 0 6px -22px;
}

/* format bar */
.formatbar {
    flex: none;
    height: 48px;
    display: flex;
    border-bottom: 2px solid #e3e3e3;
}
.cell {
    display: flex;
    align-items: center;
    border-right: 1px solid #e3e3e3;
}
.cell select {
    flex: 1;
    min-width: 0;
}
.cell label, .cell span {
    white-space: nowrap;
}
.style-cell {
    width: 215px;
    padding: 0 13px 0 19px;
    gap: 14px;
}
.font-cell {
    width: 146px;
    padding: 0 12px 0 10px;
}
.size-cell {
    width: 77px;
    padding: 0 10px 0 11px;
}
.text-cell {
    width: 207px;
    padding: 0 15px 0 17px;
    justify-content: space-between;
}
.align-cell {
    width: 256px;
    padding: 0 19px 0 17px;
    justify-content: space-between;
}
.fill-cell {
    width: 155px;
    padding: 0 17px 0 13px;
    justify-content: space-between;
}
.line-cell {
    width: 236px;
    padding: 0 16px 0 13px;
    justify-content: space-between;
}
.swatch {
    width: 17px;
    height: 17px;
    border: 1px solid #777;
}
.swatch.dark {
    background: #777;
}
.pos-cell {
    padding-left: 13px;
    gap: 6px;
    border-right: 0;
}
.pos-cell label {
    width: 19px;
    font-size: 13px;
    color: #666;
}
.unlock {
    margin-left: -3px;
}
.eye {
    margin-left: -5px;
}
.num {
    width: 45px;
    height: 26px;
    font-size: 17px;
    border-bottom: 1px solid #888;
}
.num.on {
    border-color: #5d92c4;
}
.num.tiny {
    width: 30px;
}

/* side panels */
.workspace {
    flex: 1;
    min-height: 0;
    display: flex;
}
.left {
    flex: none;
    width: 360px;
    display: flex;
    flex-direction: column;
    border-right: 1px solid #ccc;
}
.panel-tabs {
    flex: none;
    height: 51px;
    padding: 10px 18px 0;
    display: flex;
    gap: 155px;
    background: #fafafa;
    border-bottom: 1px solid #ccc;
}
.panel-tabs.second {
    height: 52px;
    padding-top: 11px;
    border-top: 1px solid #ccc;
}
.panel-tabs.spread {
    gap: 0;
    padding: 10px 22px 0 18px;
    justify-content: space-between;
}
.ptab {
    padding: 0 1px;
    font-size: 16px;
    border-bottom: 4px solid transparent;
}
.ptab.on {
    color: #3f80c6;
    font-weight: 600;
    border-color: #5286c0;
}
.page-search {
    flex: none;
    height: 47px;
    margin: 0 21px 0 21px;
    padding: 0 5px 2px 2px;
    display: flex;
    align-items: center;
    gap: 26px;
    color: #999;
    border-bottom: 1px solid #ddd;
}
.push {
    margin-left: auto;
}
.tree-box {
    flex: none;
    height: 387px;
    margin-top: 7px;
    overflow: hidden;
}
.tree {
    height: 410px;
    margin-top: -15px;
    display: grid;
    grid-auto-rows: 1fr;
}
.tree li {
    display: flex;
    align-items: center;
    gap: 8px;
    padding-left: 19px;
}
.tree .caret {
    border-width: 7px 5px 0;
    border-top-color: #888;
}
.tree .l1 { padding-left: 40px; }
.tree .l2 { padding-left: 61px; }
.tree .l3 { padding-left: 82px; }
.tree .l4 { padding-left: 103px; }
.tree .l5 { padding-left: 123px; }
.tree .leaf .caret {
    visibility: hidden;
}
.tree .current {
    margin-right: 4px;
    font-weight: 600;
    background: #e9f6f8;
}
.lib-search {
    flex: none;
    height: 47px;
    margin: 0 21px 0 18px;
    padding: 0 0 2px 5px;
    display: flex;
    align-items: center;
    border-bottom: 1px solid #ececec;
    color: #5b8ab8;
}
.lib-search input {
    width: 154px;
    height: 27px;
    margin: 0 2px 0 8px;
    font-size: 16px;
    border-bottom: 1px solid #888;
}
.lib-search button {
    margin-left: 26px;
}
::placeholder {
    color: #c6c6c6;
    opacity: 1;
}
.lib-pick {
    flex: none;
    height: 44px;
    margin: 0 21px 0 18px;
    padding-top: 9px;
    display: flex;
    align-items: center;
    border-bottom: 2px solid #888;
}
.lib-pick select {
    flex: 1;
    padding-left: 1px;
    font-size: 24px;
    line-height: 33px;
    height: 33px;
}
.crumb {
    margin: 15px 0 0 18px;
    display: flex;
    align-items: center;
    gap: 10px;
    font-size: 13px;
    line-height: 22px;
    color: #888;
}
.crumb .caret {
    border-width: 6px 3px 0;
    border-top-color: #777;
}
.widgets {
    display: grid;
    grid-template-columns: repeat(3, 119px);
    margin: 18px 0 0 -2px;
    row-gap: 1px;
}
.widget {
    height: 101px;
    text-align: center;
    font-size: 14px;
    line-height: 38px;
}
.shape {
    height: 40px;
    display: flex;
    align-items: center;
    justify-content: center;
}
.mini {
    width: 39px;
    height: 18px;
    font: bold 8px/16px "Liberation Sans", Arial, sans-serif;
    color: #555;
    border: 1px solid #777;
    border-radius: 2px;
}
.mini.primary {
    color: #e6f3ff;
    background: #4890d0;
    border-color: #4890d0;
}
.mini.link {
    color: #4878b8;
    border-color: transparent;
}

.right {
    flex: none;
    width: 378px;
    border-left: 2px solid #ddd;
}
.name-row {
    height: 61px;
    padding: 2px 20px 0;
    display: flex;
    align-items: center;
    border-bottom: 1px solid #ddd;
}
.name-row input {
    width: 100%;
    height: 40px;
    font-size: 24px;
}
.interactions {
    height: 344px;
    padding: 16px 21px 0 20px;
    display: flex;
    flex-direction: column;
    border-bottom: 1px solid #e3e3e3;
}
.row {
    display: flex;
    align-items: center;
    justify-content: space-between;
    padding-right: 4px;
    font-size: 14px;
    line-height: 24px;
    color: #888;
}
.new-btn {
    height: 39px;
    margin: 18px 0 51px;
    padding-bottom: 2px;
    font-size: 19px;
    font-weight: 500;
    color: #e8f5ff;
    background: #4788dc;
    border-radius: 2px;
}
.common {
    margin-bottom: 12px;
    font-size: 14px;
    line-height: 26px;
    text-align: center;
    color: #888;
}
.quick {
    height: 31px;
    margin-bottom: 12px;
    padding-bottom: 2px;
    color: #888;
    border: 1px solid #ccc;
    border-radius: 4px;
}
.props {
    padding: 16px 21px 0 20px;
}
.all {
    display: flex;
    align-items: center;
    gap: 15px;
}
.sub {
    margin-top: 13px;
    font-size: 14px;
    line-height: 24px;
    color: #777;
}
.add {
    margin: 10px 0 0 3px;
    display: flex;
    align-items: center;
    gap: 9px;
    line-height: 24px;
}
.add a {
    color: #333;
    text-underline-offset: 3px;
}

/* centre */
.center {
    flex: 1;
    min-width: 0;
    display: flex;
    flex-direction: column;
}
.tabs {
    flex: none;
    height: 29px;
    display: flex;
    background: #ebebeb;
    border-bottom: 1px solid #ccc;
}
.tab {
    display: flex;
    align-items: center;
    gap: 28px;
    padding: 0 10px 0 11px;
    font-size: 14px;
    color: #888;
    border-right: 1px solid #d8d8d8;
    white-space: nowrap;
}
.tab.on {
    color: #333;
    font-weight: 600;
    background: #fff;
}
.tab.more {
    flex: 1;
    background: #cfcfcf;
    border: 0;
}
.tab.more .caret {
    border-top-color: #888;
}
.x {
    width: 8px;
    height: 8px;
    background:
        linear-gradient(45deg, transparent 45%, #888 45%, #888 56%, transparent 56%),
        linear-gradient(-45deg, transparent 45%, #888 45%, #888 56%, transparent 56%);
}
.hrow {
    flex: none;
    height: 22px;
    display: flex;
    align-items: center;
    border-bottom: 1px solid #bbb;
}
.origin {
    margin: 0 3px 0 2px;
}
.hruler {
    flex: 1;
    min-width: 0;
    height: 21px;
    display: flex;
    overflow: hidden;
    border-left: 1px solid #ccc;
}
.hruler span {
    flex: none;
    width: 229px;
    padding-left: 5px;
    font-size: 14px;
    line-height: 20px;
    color: #888;
    border-left: 1px solid #ccc;
    background:
        linear-gradient(90deg, #ccc 1px, transparent 1px) 0 100% / 50% 12px repeat-x,
        linear-gradient(90deg, #ddd 1px, transparent 1px) 0 100% / 10% 5px repeat-x;
}
.hruler .lead {
    width: 110px;
    border: 0;
    background: linear-gradient(90deg, #ddd 1px, transparent 1px) 18px 100% / 23px 5px repeat-x #f6f6f9;
}
.stage {
    flex: 1;
    min-height: 0;
    display: flex;
}
.vruler {
    flex: none;
    width: 22px;
    overflow: hidden;
    border-right: 1px solid #ccc;
}
.vruler span {
    display: block;
    height: 229px;
    padding-top: 5px;
    border-top: 1px solid #ccc;
    background:
        linear-gradient(#ccc 1px, transparent 1px) 100% 0 / 11px 50% repeat-y,
        linear-gradient(#ccc 1px, transparent 1px) 100% 0 / 5px 10% repeat-y;
}
.vruler .lead {
    height: 113px;
    border: 0;
    background: linear-gradient(#ccc 1px, transparent 1px) 100% 20px / 5px 23px repeat-y #f8f8f8;
}
.vruler b {
    display: block;
    width: 20px;
    writing-mode: vertical-rl;
    transform: rotate(180deg);
    line-height: 20px;
    font-size: 14px;
    font-weight: normal;
    color: #888;
}
.canvas {
    flex: 1;
    min-width: 0;
    position: relative;
    overflow: hidden;
}
.dots {
    position: absolute;
    inset: 0;
}
.selection {
    position: absolute;
    left: 110px;
    top: 112px;
    width: 431px;
    height: 766px;
    background: #fff;
    border: 2px solid #a5cfd4;
}
.h {
    position: absolute;
    width: 9px;
    height: 9px;
    background: #fff;
    border: 1px solid #444;
}
.nw, .n, .ne { top: -5px; }
.sw, .s, .se { bottom: -5px; }
.nw, .w, .sw { left: -5px; }
.ne, .e, .se { right: -5px; }
.n, .s { left: calc(50% - 5px); }
.w, .e { top: calc(50% - 5px); }
.corner {
    position: absolute;
    left: -6px;
    top: -16px;
}
.cursor {
    position: absolute;
    left: 434px;
    top: 274px;
}
.vbar, .hbar {
    position: absolute;
    background: #d3d3d5;
    border-radius: 3px;
}
.vbar {
    right: 3px;
    top: 412px;
    width: 10px;
    height: 107px;
}
.hbar {
    left: 557px;
    bottom: 3px;
    width: 108px;
    height: 9px;
}

/* phone mockup */
.phone {
    position: absolute;
    left: 731px;
    top: 112px;
    width: 430px;
    border: solid #aaa;
    border-width: 0 1px;
    background: linear-gradient(#999 168px, #f5f5f5 168px);
    font-family: "Liberation Sans", "Noto Sans CJK SC", sans-serif;
    color: #333;
}
.phone-status {
    height: 24px;
    padding: 0 6px;
    display: flex;
    align-items: center;
    gap: 4px;
    font-size: 12px;
    color: #111;
}
.time {
    flex: 1;
    text-align: center;
    padding-left: 45px;
}
.pct {
    margin-right: 5px;
    color: #666;
}
.phone-search {
    display: flex;
    align-items: center;
    justify-content: space-between;
    padding: 0 13px;
    margin-top: 6px;
}
.pill {
    width: 361px;
    height: 33px;
    padding: 2px 0 0 12px;
    display: flex;
    align-items: center;
    gap: 5px;
    font-size: 11px;
    color: #888;
    background: #fff;
    border-radius: 17px;
}
.scan {
    width: 19px;
    height: 19px;
    margin-bottom: 2px;
    font-size: 7px;
    line-height: 17px;
    text-align: center;
    border: 1px solid #999;
    background: #eee;
}
.msg {
    position: relative;
    width: 27px;
    height: 27px;
    font-size: 10px;
    line-height: 27px;
    text-align: center;
    background: #ddd;
}
.msg i {
    position: absolute;
    right: -7px;
    top: -12px;
    width: 20px;
    height: 20px;
    font: bold 9px/20px "Liberation Sans", Arial, sans-serif;
    color: #fff;
    background: #777;
    border-radius: 50%;
}
.cats {
    height: 38px;
    padding: 9px 13px 0 12px;
    display: flex;
    align-items: center;
    justify-content: space-between;
    font-size: 14px;
    font-weight: 700;
    color: #fff;
}
.cats b {
    padding-bottom: 2px;
    font-size: 16px;
}
.banner {
    height: 138px;
    margin: 0 13px 0 12px;
    padding-top: 60px;
    font-size: 15px;
    line-height: 18px;
    text-align: center;
    background: #d7d7d7;
    border-radius: 3px;
}
.banner i {
    display: block;
    width: 20px;
    height: 3px;
    margin: 52px auto 0;
    background: #f0f0f0;
    border-radius: 2px;
}
.circles {
    display: grid;
    grid-template-columns: repeat(5, 1fr);
    padding: 19px 2px 0 1px;
    font-size: 14px;
    line-height: 27px;
    text-align: center;
}
.circles div {
    height: 88px;
}
.circles i {
    display: block;
    width: 50px;
    height: 50px;
    margin: 0 auto;
    border-radius: 50%;
    background: #d5d5d5;
}
.card {
    margin: 9px 15px 0 12px;
    background: #fff;
    border-radius: 4px;
}
.deals {
    display: flex;
    border-bottom: 1px solid #eee;
}
.deal {
    flex: 1;
    padding: 7px 5px 8px 7px;
}
.deal:first-child {
    border-right: 1px solid #eee;
}
.deal h2 {
    display: flex;
    align-items: center;
    font-size: 16px;
    line-height: 27px;
}
.count {
    display: flex;
    align-items: center;
    gap: 1px;
    margin-left: 8px;
    font-size: 12px;
}
.count i {
    width: 15px;
    font: bold 9px/15px "Liberation Sans", Arial, sans-serif;
    text-align: center;
    color: #fff;
    background: #999;
    border-radius: 2px;
}
.tag {
    margin-left: 3px;
    padding: 0 9px;
    font-size: 9px;
    line-height: 12px;
    color: #fff;
    background: #999;
    border-radius: 6px;
}
.pics {
    display: flex;
    justify-content: space-between;
}
.pic {
    width: 87px;
    height: 87px;
    font-size: 15px;
    line-height: 86px;
    text-align: center;
    background: #f0f0f0;
}
.pics p {
    padding-left: 2px;
    font-size: 15px;
    line-height: 22px;
    white-space: nowrap;
}
.pics s {
    font-size: 11px;
    color: #999;
}
.zones {
    display: flex;
    justify-content: space-between;
    padding: 13px 5px 10px 6px;
    text-align: center;
}
h3 {
    font-size: 16px;
    line-height: 22px;
}
small {
    display: block;
    font-size: 11px;
    line-height: 14px;
    color: #999;
}
.zones .pic {
    height: 89px;
    margin-top: 1px;
}
.feeds {
    display: grid;
    grid-template-columns: repeat(5, 1fr);
    padding-top: 13px;
    height: 60px;
    text-align: center;
    color: #777;
}
.feeds .on, .feeds .on small {
    color: #333;
}
.feeds .on::after {
    content: "";
    display: block;
    width: 26px;
    height: 2px;
    margin: 0 auto;
    background: #555;
}
.goods {
    position: relative;
    height: 60px;
    margin: 0 12px;
    display: flex;
    gap: 13px;
    background: #ebf0dc;
}
.goods i {
    flex: 1;
    background: #cfd8bf;
}
.bolt {
    position: absolute;
    right: 2px;
    top: -12px;
}

/* desktop behind the window */
.under {
    flex: none;
    height: 15px;
    background: linear-gradient(#444, #7d7d82);
}
.strip {
    flex: none;
    height: 12px;
    display: flex;
    gap: 13px;
    background: #b8b8c0;
}
.blue {
    flex: 1;
    background: #1f408c;
}
.maroon {
    width: 211px;
    background: #8c2820;
}
```
